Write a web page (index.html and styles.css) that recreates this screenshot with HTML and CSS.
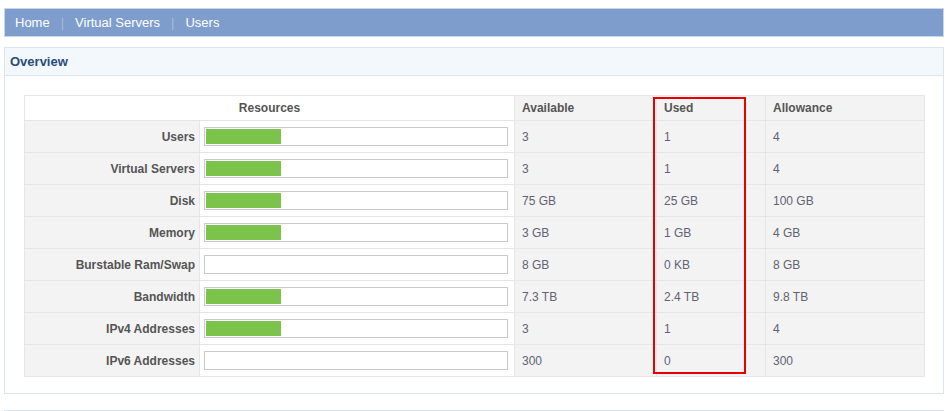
FILE: index.html
```html
<!DOCTYPE html>
<html lang="en">
<head>
    <meta charset="UTF-8">
    <title>Users - Overview</title>
    <link rel="stylesheet" href="styles.css">
</head>
<body>
    <div class="breadcrumb">
        <a href="#">Home</a><span class="sep">|</span><a href="#">Virtual Servers</a><span class="sep">|</span><a href="#">Users</a>
    </div>

    <div class="panel">
        <div class="panel-title">Overview</div>
        <div class="panel-body">
            <div class="table-wrap">
                <table class="resources">
                    <colgroup>
                        <col style="width: 175px">
                        <col style="width: 315px">
                        <col style="width: 142px">
                        <col style="width: 109px">
                        <col>
                    </colgroup>
                    <thead>
                        <tr>
                            <th colspan="2" class="res-head">Resources</th>
                            <th>Available</th>
                            <th>Used</th>
                            <th>Allowance</th>
                        </tr>
                    </thead>
                    <tbody>
                        <tr>
                            <td class="label">Users</td>
                            <td class="bar-cell"><div class="bar"><div class="fill" style="width: 25%"></div></div></td>
                            <td>3</td><td>1</td><td>4</td>
                        </tr>
                        <tr>
                            <td class="label">Virtual Servers</td>
                            <td class="bar-cell"><div class="bar"><div class="fill" style="width: 25%"></div></div></td>
                            <td>3</td><td>1</td><td>4</td>
                        </tr>
                        <tr>
                            <td class="label">Disk</td>
                            <td class="bar-cell"><div class="bar"><div class="fill" style="width: 25%"></div></div></td>
                            <td>75 GB</td><td>25 GB</td><td>100 GB</td>
                        </tr>
                        <tr>
                            <td class="label">Memory</td>
                            <td class="bar-cell"><div class="bar"><div class="fill" style="width: 25%"></div></div></td>
                            <td>3 GB</td><td>1 GB</td><td>4 GB</td>
                        </tr>
                        <tr>
                            <td class="label">Burstable Ram/Swap</td>
                            <td class="bar-cell"><div class="bar"><div class="fill" style="width: 0%"></div></div></td>
                            <td>8 GB</td><td>0 KB</td><td>8 GB</td>
                        </tr>
                        <tr>
                            <td class="label">Bandwidth</td>
                            <td class="bar-cell"><div class="bar"><div class="fill" style="width: 25%"></div></div></td>
                            <td>7.3 TB</td><td>2.4 TB</td><td>9.8 TB</td>
                        </tr>
                        <tr>
                            <td class="label">IPv4 Addresses</td>
                            <td class="bar-cell"><div class="bar"><div class="fill" style="width: 25%"></div></div></td>
                            <td>3</td><td>1</td><td>4</td>
                        </tr>
                        <tr>
                            <td class="label">IPv6 Addresses</td>
                            <td class="bar-cell"><div class="bar"><div class="fill" style="width: 0%"></div></div></td>
                            <td>300</td><td>0</td><td>300</td>
                        </tr>
                    </tbody>
                </table>
                <div class="highlight"></div>
            </div>
        </div>
    </div>

    <div class="panel"></div>
</body>
</html>
```

FILE: styles.css
```css
body {
    margin: 8px 4px;
    font-family: "Liberation Sans", Arial, sans-serif;
    font-size: 12px;
    background: #fff;
}
.breadcrumb {
    height: 27px;
    line-height: 27px;
    padding-left: 10px;
    background: #7e9ccc;
    border: 1px solid #c9d6ea;
    font-size: 13px;
}
.breadcrumb a {
    color: #fff;
    text-decoration: none;
}
.breadcrumb .sep {
    color: #a9bbd9;
    margin: 0 11px 0 11px;
}
.panel {
    margin-top: 10px;
    border: 1px solid #d9e4ef;
}
.panel + .panel {
    margin-top: 16px;
}
.panel-title {
    height: 27px;
    line-height: 27px;
    padding-left: 5px;
    background: #f3f8fd;
    border-bottom: 1px solid #d9e4ef;
    color: #2b4b7d;
    font-weight: bold;
    font-size: 13px;
}
.panel-body {
    padding: 19px 18px 16px 19px;
}
.table-wrap {
    position: relative;
}
.resources {
    width: 100%;
    table-layout: fixed;
    border-collapse: collapse;
    border: 1px solid #e6e6e6;
}
.resources th,
.resources td {
    border: 1px solid #e6e6e6;
    background: #f3f3f3;
    text-align: left;
    padding: 0 7px;
    color: #626272;
}
.resources th {
    height: 24px;
    color: #555;
    font-weight: bold;
}
.resources th.res-head {
    background: #fff;
    text-align: center;
}
.resources td {
    height: 31px;
}
.resources td.label {
    text-align: right;
    font-weight: bold;
    color: #555;
    padding: 0 4px 0 0;
}
.resources td.bar-cell {
    background: #fff;
    padding: 0 6px 0 4px;
}
.bar {
    height: 15px;
    padding: 1px;
    border: 1px solid #c9c9c9;
    background: #fff;
}
.fill {
    height: 100%;
    background: #7bc34a;
}
.highlight {
    position: absolute;
    left: 629px;
    top: 2px;
    width: 89px;
    height: 273px;
    border: 2px solid #e60000;
}
```
